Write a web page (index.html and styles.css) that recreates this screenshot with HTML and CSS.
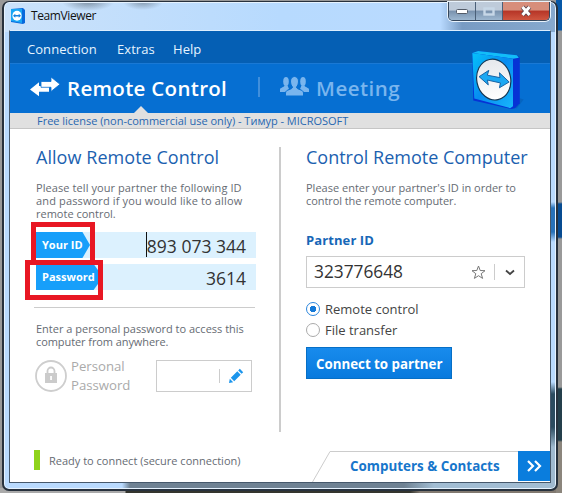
FILE: index.html
```html
<!DOCTYPE html>
<html lang="en">
<head>
<meta charset="utf-8">
<title>TeamViewer</title>
<link rel="stylesheet" href="styles.css">
</head>
<body>
<div class="desktop">
<div class="window">
  <header class="titlebar">
    <svg class="app-icon" width="14" height="16" viewBox="0 0 14 16"><path d="M0 1 12 0 14 2V15l-2 1L0 14z" fill="#0868dc"/><path d="M0 1 11 1V15L0 13z" fill="#18a6f5"/><ellipse cx="6" cy="7.8" rx="4.6" ry="5" fill="#fff"/><path d="m2 7.8 2.3-2v1.3h3.4V5.8l2.3 2-2.3 2V8.500H4.300v1.300z" fill="#1681df"/></svg>
    <span class="app-title">TeamViewer</span>
    <div class="window-buttons">
      <span class="wb"><svg width="12" height="5" viewBox="0 0 12 5"><rect x=".5" y=".5" width="11" height="4" rx="1" fill="#fff" stroke="#535b68"/></svg></span>
      <span class="wb wb-max"><svg width="12" height="9" viewBox="0 0 12 9"><rect x="1.500" y="1.500" width="9" height="6" fill="none" stroke="#c7d7e7" stroke-width="2.400"/></svg></span>
      <span class="wb wb-close"><svg width="14" height="12" viewBox="0 0 14 12"><path d="m3.500 2 7 8M10.500 2l-7 8" stroke="#57424a" stroke-width="4.600"/><path d="m3.500 2 7 8M10.500 2l-7 8" stroke="#fff" stroke-width="3"/></svg></span>
    </div>
  </header>
  <main class="client">
    <nav class="menu"><span class="m1">Connection</span><span class="m2">Extras</span><span class="m3">Help</span></nav>
    <div class="tabs">
      <div class="tab tab-active">
        <svg width="30" height="20" viewBox="0 0 30 20"><path d="m0 12.500 9-7.300V9l10 0V14.800H9v4.500z" fill="#fff"/><path d="M11 4.500h10V0l9 7.300-9 7.200v-4.200H11z" fill="#fff" stroke="#066fd2" stroke-width=".8"/></svg>
        <span class="tab-text t-remote">Remote Control</span>
      </div>
      <i class="tab-sep"></i>
      <div class="tab tab-idle">
        <svg width="29" height="20" viewBox="0 0 29 20"><g fill="#79b5ee"><ellipse cx="6" cy="5.500" rx="2.800" ry="4.500"/><path d="M0 16v-2.500c0-2 4-2 4.500-4h3L9 13l-3 3z"/><ellipse cx="23" cy="5.500" rx="2.800" ry="4.500"/><path d="M29 16v-2.500c0-2-4-2-4.500-4h-3L20 13l3 3z"/><path stroke="#066fd2" stroke-width="1" d="M10.500 5c0-6 8-6 8 0 0 3-1 5-2 6 0 3 7 2 7 6v3h-18v-3c0-4 7-3 7-6-1-1-2-3-2-6z"/></g></svg>
        <span class="tab-text t-meeting">Meeting</span>
      </div>
      <i class="notch"></i>
      <svg class="logo" width="53" height="62" viewBox="0 0 54 64">
        <defs><linearGradient id="face" x1="0" y1="0" x2="1" y2="1"><stop offset="0" stop-color="#06c2fa"/><stop offset=".48" stop-color="#078cf0"/><stop offset="1" stop-color="#18b6fb"/></linearGradient><linearGradient id="disc" x1="0" y1="0" x2="0" y2="1"><stop offset="0" stop-color="#e5e8ec"/><stop offset="1" stop-color="#fff"/></linearGradient></defs>
        <path d="M45 48 54 51 47 60 40 60z" fill="#0750a0" opacity=".35"/>
        <path d="M1 3 7 1 47 5.500 50 8V55l-5 5-4 1L2 52z" fill="#0632d5"/>
        <path d="M1 3 7 1 47 5.500 49 8 43 9z" fill="#12bdf8"/>
        <path d="M1 3 43 9V58L40 60 3 50z" fill="url(#face)"/>
        <ellipse cx="23" cy="30.500" rx="17.500" ry="21.200" transform="rotate(-12 23 30)" fill="url(#disc)" stroke="#163652" stroke-width="1.200"/>
        <path d="m8 27.500 10-6.500-1.500 5 13 2.500-.5-5L39 33l-10 6 1-5-13.500-3 1 5z" fill="#1ba8f3" stroke="#1560a2"/>
      </svg>
    </div>
    <div class="license"><span>Free license (non-commercial use only) - Тимур - MICROSOFT</span></div>
    <div class="content">
      <section class="allow">
        <h1 class="h-allow">Allow Remote Control</h1>
        <p class="desc"><span class="d1">Please tell your partner the following ID</span><span class="d2">and password if you would like to allow</span><span class="d3">remote control.</span></p>
        <div class="cred cred-id"><span class="tag tag-id">Your ID</span><span class="value v-id">893 073 344</span><i class="mark mark-id"></i></div>
        <div class="cred cred-pw"><span class="tag tag-pw">Password</span><span class="value v-pw">3614</span><i class="mark mark-pw"></i></div>
        <hr>
        <p class="desc hint"><span class="d4">Enter a personal password to access this</span><span class="d5">computer from anywhere.</span></p>
        <div class="personal">
          <svg width="32" height="32" viewBox="0 0 32 32"><circle cx="16" cy="16" r="15" fill="none" stroke="#cecece" stroke-width="1.800"/><path d="M10 13h12v10H10z" fill="#cbcbcb"/><path d="M12.500 13v-2a3.500 3.500 0 0 1 7 0v2" fill="none" stroke="#cbcbcb" stroke-width="1.800"/><path d="M15.200 16h1.700v4h-1.700z" fill="#fff"/></svg>
          <span class="personal-label"><span>Personal</span><span>Password</span></span>
          <div class="personal-input"><i></i><svg width="16" height="16" viewBox="0 0 16 16"><path d="m1 15 .8-4.200 3.400 3.400zM2.800 9.800 9.300 3.300l3.400 3.400-6.500 6.500zM10.200 2.400l1.600-1.600 3.400 3.400-1.600 1.600z" fill="#1b95ec"/></svg></div>
        </div>
      </section>
      <section class="control">
        <h1 class="h-control">Control Remote Computer</h1>
        <p class="desc"><span class="d6">Please enter your partner's ID in order to</span><span class="d7">control the remote computer.</span></p>
        <div class="partner">Partner ID</div>
        <div class="combo"><span class="combo-value">323776648</span><svg width="15" height="15" viewBox="0 0 15 15"><path d="m7.500 1 1.700 4.500 4.800.2-3.800 3 1.400 4.700-4.100-2.700-4.100 2.700 1.400-4.700-3.800-3 4.800-.2z" fill="none" stroke="#777"/></svg><i></i><svg width="10" height="7" viewBox="0 0 10 7"><path d="m1 1.500 4 3.500 4-3.500" fill="none" stroke="#444" stroke-width="1.800"/></svg></div>
        <div class="radio"><i class="on"></i><span class="r1">Remote control</span></div>
        <div class="radio"><i></i><span class="r2">File transfer</span></div>
        <div class="connect"><span>Connect to partner</span></div>
      </section>
    </div>
    <footer class="foot">
      <i class="status"></i><span class="ready">Ready to connect (secure connection)</span>
      <div class="contacts"><svg width="18" height="31" viewBox="0 0 18 31"><path d="M.5 31 18 .5" fill="none" stroke="#ccc"/></svg><div class="contacts-label"><span>Computers &amp; Contacts</span></div><div class="more"><svg width="15" height="12" viewBox="0 0 15 12"><path d="m1 1 5 5-5 5M8 1l5 5-5 5" fill="none" stroke="#fff" stroke-width="2.200"/></svg></div></div>
    </footer>
  </main>
</div>
</div>
</body>
</html>
```
FILE: styles.css
```css
* { box-sizing: border-box; }
body { margin: 0; font-family: "Open Sans", "Noto Sans", sans-serif; overflow: hidden; }
h1, p { margin: 0; font-weight: 400; }
span { white-space: nowrap; }
svg { display: block; flex: none; }
.desktop { width: 562px; height: 493px; padding: 1px 4px 2px 2px; background: linear-gradient(#0758a7 0 30px, #999 31px 202px, #074b91 204px 237px, #999 239px 387px, #243f4b 389px 440px, #8b857c 442px) right / 6px 100% no-repeat, linear-gradient(90deg, #aaa 0 125px, #34352e 126px 410px, #817970 420px) bottom / 100% 5px no-repeat, #999; }
.window { width: 556px; height: 490px; padding: 0 6px 7px; border: 1px solid #27313d; border-width: 1px 2px 2px; border-radius: 7px; background: radial-gradient(ellipse 26px 9px at 84px 0, #52616f99, #52616f00), radial-gradient(ellipse 20px 8px at 139px 0, #52616f88, #52616f00), linear-gradient(#b9daff00 200px, #2872b9 206px 230px, #b9daff00 240px 380px, #2b4b60 392px 425px, #9fb9cf 445px) right / 6px 100% no-repeat, linear-gradient(90deg, #b9dafe 0 118px, #6f8293 126px 400px, #a2bdd3 430px) bottom / 100% 6px no-repeat, linear-gradient(90deg, #cbe2fa, #b7dafe 50%, #b9daff 79%, #789bc3 83%, #86a9ce) top / 100% 30px no-repeat, #b9dafe; box-shadow: inset 0 0 0 1px #e6f3ff; }
.titlebar { height: 28px; display: flex; }
.app-icon { margin: 6px 6px 0 1px; }
.app-title { font-size: 12px; line-height: 16px; margin-top: 6px; color: #111; letter-spacing: -.4px; }
.window-buttons { display: flex; height: 19px; margin-left: auto; border: 1px solid #35465b; border-top: 0; border-radius: 0 0 5px 5px; overflow: hidden; box-shadow: 0 0 0 1px #e8f2fb; }
.wb { width: 27px; display: grid; place-items: center; background: linear-gradient(#becbda 45%, #7992ae 50%, #9db7d0); border-right: 1px solid #4b6078; }
.wb-close { width: 46px; border: 0; background: linear-gradient(#d78e7b 45%, #b63527 50%, #cf5640); }
.client { width: 542px; height: 453px; background: #fff; border: 1px solid #46586b; border-top-color: #dceeff; display: flex; flex-direction: column; margin-left: -1px; }
.menu { height: 32px; flex: none; background: #055fb4; color: #e6f4ff; display: flex; padding-left: 17px; font-size: 13px; line-height: 36px; letter-spacing: .05px; }
.menu span { flex: none; }
.m1 { width: 90px; }
.m2 { width: 56px; }
.tabs { position: relative; height: 50px; flex: none; display: flex; background: #066fd2; border-top: 1px solid #1a79d5; }
.tab { display: flex; }
.tab-active { width: 248px; padding-left: 20px; }
.tab-active svg { margin: 13px 7px 0 0; }
.tab-text { font-size: 20.5px; font-weight: 600; line-height: 26px; margin-top: 11px; color: #fff; letter-spacing: .3px; }
.tab-idle svg { margin: 12px 7px 0 0; }
.tab-idle .tab-text { color: #79b5ee; letter-spacing: .5px; }
.tab-sep { width: 2px; height: 20px; margin: 13px 20px 0 0; background: #408fdc; }
.notch { position: absolute; left: 124px; bottom: 0; border: 7px solid transparent; border-top: 0; border-bottom-color: #e0e0e0; }
.logo { position: absolute; left: 461px; top: -14px; }
.license { height: 16px; flex: none; background: #e0e0e0; border-bottom: 1px solid #c5c5c5; font-size: 11px; line-height: 16px; padding-left: 27px; color: #2867b0; letter-spacing: -.02px; }
.content { height: 303px; flex: none; display: grid; grid-template-columns: 271px 1fr; background: linear-gradient(#ccc, #ccc) 269px 18px / 2px 285px no-repeat; }
.allow { padding: 16px 0 0 26px; }
.control { padding: 16px 0 0 25px; }
h1 { font-size: 18px; line-height: 24px; color: #1b61b0; white-space: nowrap; }
.h-allow { letter-spacing: .05px; }
.desc { margin-top: 12px; height: 39px; color: #666b73; font-size: 11px; line-height: 13px; }
.desc span { display: block; }
.d1 { letter-spacing: .08px; }
.d2 { letter-spacing: .14px; }
.d5, .d7 { letter-spacing: -.08px; }
.cred { position: relative; width: 220px; height: 26px; background: #dcf1fe; display: flex; justify-content: space-between; padding-right: 10px; margin-top: 12px; }
.cred-pw { margin-top: 6px; }
.tag { background: #179ffa; color: #fff; font-size: 11px; font-weight: 700; line-height: 26px; padding-left: 6px; width: 54px; clip-path: polygon(0 0, 86% 0, 100% 50%, 86% 100%, 0 100%); }
.tag-pw { width: 67px; }
.value { font-size: 17.5px; line-height: 28px; color: #333; }
.v-id { border-left: 1px solid #111; height: 25px; }
.mark { position: absolute; border: 5px solid #e81723; }
.mark-id { left: -5px; top: -10px; width: 64px; height: 43px; }
.mark-pw { left: -11px; top: -4px; width: 78px; height: 40px; }
hr { border: 0; height: 1px; width: 221px; margin: 17px 0 0 -2px; background: #ccc; }
.hint { margin-top: 14px; height: 26px; }
.personal { display: flex; margin: 12px 0 0 -1px; height: 32px; }
.personal-label { margin: -3px 0 0 4px; width: 85px; font-size: 13.2px; line-height: 19px; color: #aaa; }
.personal-label span { display: block; }
.personal-input { width: 96px; height: 32px; border: 1px solid #ccc; display: flex; align-items: center; }
.personal-input i { margin-left: 62px; width: 1px; height: 14px; background: #ccc; }
.personal-input svg { margin-left: 8px; }
.control .desc { height: 26px; }
.partner { margin-top: 24px; font-size: 13px; font-weight: 700; line-height: 18px; color: #1767b7; letter-spacing: .1px; }
.combo { width: 219px; height: 32px; margin-top: 7px; border: 1px solid #ccc; display: flex; align-items: center; padding-left: 7px; }
.combo-value { width: 157px; font-size: 17.3px; line-height: 30px; color: #333; }
.combo i { width: 1px; height: 16px; background: #ccc; margin: 0 10px 0 8px; }
.radio { height: 21px; display: flex; color: #444; font-size: 13px; line-height: 22px; }
.combo + .radio { margin-top: 10px; }
.radio i { width: 14px; height: 14px; border: 1px solid #aaa; border-radius: 50%; margin: 4px 5px 0 0; }
.radio i.on { border-color: #2b86dd; background: radial-gradient(circle, #1479d8 0 3px, #fff 3.5px); }
.connect { width: 146px; height: 32px; margin-top: 7px; border: 1px solid #066fc6; background: linear-gradient(#188bed, #087ade); color: #fff; font-size: 13.3px; line-height: 32px; font-weight: 700; padding-left: 9px; }
.foot { height: 49px; flex: none; display: flex; padding-top: 19px; }
.status { width: 6px; height: 20px; background: #8fd31b; margin: -1px 0 0 24px; }
.ready { margin: -1px 0 0 9px; width: 264px; font-size: 11px; line-height: 21px; color: #666b73; }
.contacts { display: flex; }
.contacts-label { width: 188px; border-top: 1px solid #ccc; padding-left: 20px; font-size: 13.4px; font-weight: 700; line-height: 28px; color: #1776cb; }
.more { width: 32px; height: 30px; background: #0a7ddd; display: grid; place-items: center; }
```
